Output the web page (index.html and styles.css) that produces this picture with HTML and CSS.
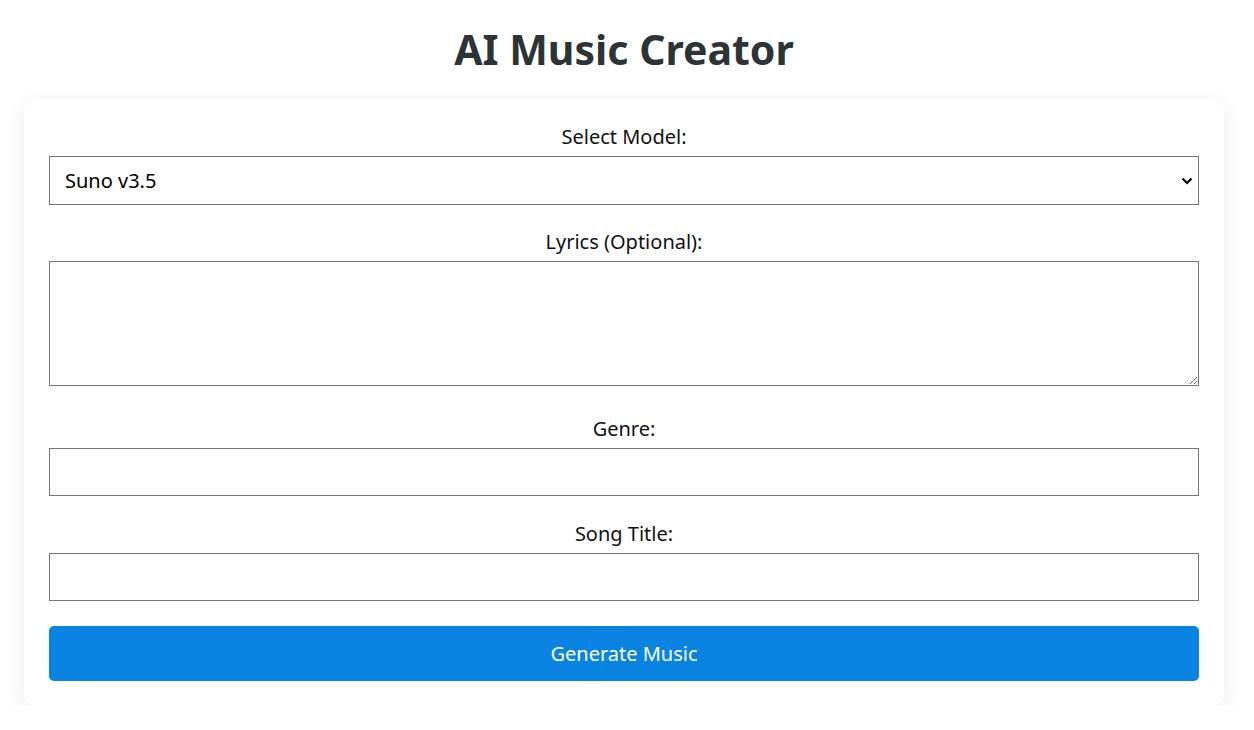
FILE: index.html
```html
<!DOCTYPE html>
<html lang="en">
<head>
<meta charset="utf-8">
<title>AI Music Creator</title>
<link rel="stylesheet" href="styles.css">
</head>
<body>
<div class="page">
  <h1 class="title">AI Music Creator</h1>
  <form class="card">
    <label class="label" for="model">Select Model:</label>
    <div class="select-wrap">
      <select id="model" class="field select">
        <option>Suno v3.5</option>
      </select>
      <svg class="chevron" width="12" height="8" viewBox="0 0 12 8"><path d="M1.5 1.5 L6 6 L10.5 1.5" fill="none" stroke="#000" stroke-width="2.2"/></svg>
    </div>
    <label class="label" for="lyrics">Lyrics (Optional):</label>
    <textarea id="lyrics" class="field textarea"></textarea>
    <label class="label" for="genre">Genre:</label>
    <input id="genre" class="field input" type="text">
    <label class="label" for="title">Song Title:</label>
    <input id="title" class="field input" type="text">
    <button type="button" class="button">Generate Music</button>
  </form>
</div>
</body>
</html>
```
FILE: styles.css
```css
html, body {
  margin: 0;
  padding: 0;
  background: #ffffff;
}
body {
  font-family: "Noto Sans", "Open Sans", sans-serif;
  color: #111;
}
.page {
  max-width: 1200px;
  padding: 0 24px;
}
.title {
  margin: 0;
  padding-top: 21px;
  height: 99px;
  box-sizing: border-box;
  text-align: center;
  font-size: 41px;
  line-height: 56px;
  font-weight: 700;
  color: #2d3436;
}
.card {
  display: flex;
  flex-direction: column;
  background: #fff;
  border-radius: 12px;
  box-shadow: 0 5px 20px rgba(0, 0, 0, 0.08);
  padding: 26px 25px 25px;
}
.label {
  display: block;
  text-align: center;
  font-size: 20px;
  line-height: 24px;
  margin-bottom: 7px;
  color: #111;
}
.field {
  display: block;
  width: 100%;
  box-sizing: border-box;
  border: 1px solid #767676;
  border-radius: 0;
  background: #fff;
  font-family: inherit;
  font-size: 20px;
  color: #000;
  margin: 0 0 25px;
}
.select-wrap {
  position: relative;
}
.select {
  appearance: none;
  -webkit-appearance: none;
  height: 49px;
  padding: 0 15px;
}
.chevron {
  position: absolute;
  right: 6px;
  top: 21px;
  pointer-events: none;
}
.textarea {
  height: 125px;
  resize: vertical;
  margin-bottom: 31px;
}
.input {
  height: 48px;
  padding: 0 15px;
  margin-bottom: 26px;
}
.input:last-of-type {
  margin-bottom: 25px;
}
.button {
  height: 55px;
  border: none;
  border-radius: 5px;
  background: #0984e3;
  color: #fff;
  font-family: inherit;
  font-size: 20px;
}
```
